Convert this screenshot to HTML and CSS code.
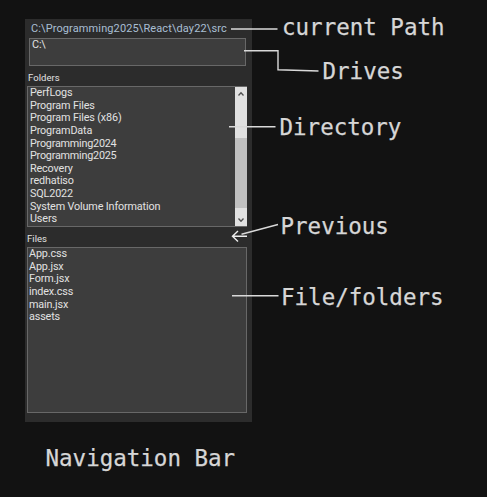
FILE: index.html
```html
<!DOCTYPE html>
<html lang="en">
<head>
<meta charset="utf-8">
<title>Navigation Bar</title>
<link rel="stylesheet" href="styles.css">
</head>
<body>
<main class="canvas">
  <section class="panel">
    <div class="path">C:\Programming2025\React\day22\src</div>
    <div class="box drives">C:\</div>
    <div class="label">Folders</div>
    <div class="box folders">
      <ul class="list">
        <li>PerfLogs</li>
        <li>Program Files</li>
        <li>Program Files (x86)</li>
        <li>ProgramData</li>
        <li class="tight">Programming2024</li>
        <li class="tight">Programming2025</li>
        <li>Recovery</li>
        <li>redhatiso</li>
        <li>SQL2022</li>
        <li>System Volume Information</li>
        <li>Users</li>
      </ul>
      <div class="scrollbar">
        <svg class="chevron" viewBox="0 0 12 14"><path d="M3.5 8.5 6 5.700 8.500 8.500"/></svg>
        <div class="thumb"></div>
        <svg class="chevron" viewBox="0 0 12 14"><path d="M3.500 10.500 6 13.300 8.500 10.500"/></svg>
      </div>
    </div>
    <div class="label files-label">Files</div>
    <div class="box files">
      <ul class="list">
        <li>App.css</li>
        <li>App.jsx</li>
        <li>Form.jsx</li>
        <li>index.css</li>
        <li>main.jsx</li>
        <li>assets</li>
      </ul>
    </div>
  </section>
  <svg class="lines" viewBox="0 0 487 497">
    <path d="M231 29H277.500M244 50.800H278V69.800L318.500 71M229 126.800H275.500M241.500 234.200 278 224.500M232 295.700H278.500"/>
    <path class="arrow" d="M247 236.300H232.500M238 231 232.500 236.300 238 241.500"/>
  </svg>
  <div class="note current">current Path</div>
  <div class="note drive">Drives</div>
  <div class="note directory">Directory</div>
  <div class="note previous">Previous</div>
  <div class="note contents">File/folders</div>
  <div class="note title">Navigation Bar</div>
</main>
</body>
</html>
```
FILE: styles.css
```css
* { box-sizing: border-box; }
body { margin: 0; background: #121212; }
.canvas { position: relative; width: 487px; height: 497px; overflow: hidden; padding: 19px 0 0 25px; }
.panel {
  width: 227px; height: 403px; padding: 2px 5px 0 2px; background: #2c2c2c;
  color: #e2e2e2; font-family: Roboto, "Liberation Sans", sans-serif; font-size: 10.8px; letter-spacing: -.14px;
}
.path { height: 17px; padding-left: 4px; line-height: 15px; font-size: 11px; color: #a9bfd4; white-space: nowrap; letter-spacing: .11px; }
.box { background: #3d3d3d; border: 1px solid #686868; }
.drives { height: 28px; margin-left: 2px; width: 217px; padding-left: 2px; line-height: 12px; }
.label { height: 20px; padding: 6px 0 0 1px; line-height: 12px; font-size: 9.5px; letter-spacing: .05px; }
.folders { display: flex; height: 141px; overflow: hidden; border-right: 0; }
.list { flex: 1; margin: 0; padding: 0 0 0 2px; list-style: none; }
.list li { height: 12.650px; line-height: 12.650px; white-space: nowrap; }
.list .tight { letter-spacing: -.22px; }
.scrollbar { width: 12px; display: flex; flex-direction: column; background: #e1e1e1; }
.chevron { width: 12px; height: 14px; fill: none; stroke: #505050; stroke-width: 1.3; }
.thumb { height: 70px; margin: 37px 0 0; background: #c1c1c1; }
.files-label { padding-left: 0; }
.files { height: 166px; }
.files .list { padding-left: 1px; }
.lines { position: absolute; inset: 0; width: 487px; height: 497px; fill: none; stroke: #d9d9d9; stroke-width: 1.4; }
.arrow { stroke: #eee; }
.note { position: absolute; color: #d6d6d6; font: 22.500px/28px "DejaVu Sans Mono", monospace; white-space: nowrap; -webkit-text-stroke: .25px #d6d6d6; }
.current { left: 282px; top: 13px; }
.drive { left: 322.500px; top: 57px; }
.directory { left: 279.500px; top: 113px; }
.previous { left: 280.500px; top: 211.500px; }
.contents { left: 281px; top: 283px; }
.title { left: 45.500px; top: 444px; }
```
